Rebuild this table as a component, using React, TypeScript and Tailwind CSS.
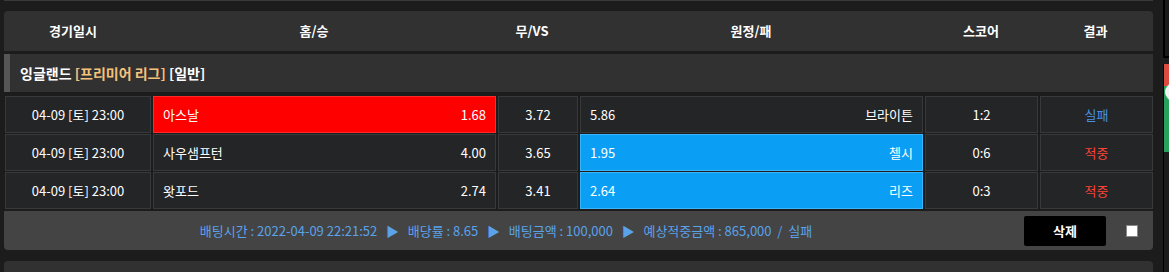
import React from 'react';

interface Game {
  date: string;
  home: string;
  homeOdds: string;
  draw: string;
  awayOdds: string;
  away: string;
  score: string;
  result: string;
  pick: 'home' | 'away';
}

const games: Game[] = [
  { date: '04-09 [토] 23:00', home: '아스날', homeOdds: '1.68', draw: '3.72', awayOdds: '5.86', away: '브라이튼', score: '1:2', result: '실패', pick: 'home' },
  { date: '04-09 [토] 23:00', home: '사우샘프턴', homeOdds: '4.00', draw: '3.65', awayOdds: '1.95', away: '첼시', score: '0:6', result: '적중', pick: 'away' },
  { date: '04-09 [토] 23:00', home: '왓포드', homeOdds: '2.74', draw: '3.41', awayOdds: '2.64', away: '리즈', score: '0:3', result: '적중', pick: 'away' },
];

const cell = 'h-full flex items-center border border-[#38393b] bg-[#242527]';

function GameRow({ g }: { g: Game }) {
  const homeCls = g.pick === 'home' ? 'bg-[#ff0000] border-[#ff2a2a]' : 'bg-[#242527] border-[#38393b]';
  const awayCls = g.pick === 'away' ? 'bg-[#0a9ff5] border-[#3ab4fb]' : 'bg-[#242527] border-[#38393b]';
  return (
    <div className="grid grid-cols-[146px_343px_80px_343px_113px_113px] gap-x-[2px] pl-[1px] h-[37px]">
      <div className={`${cell} justify-center`}>{g.date}</div>
      <div className={`h-full flex items-center justify-between border px-[9px] ${homeCls}`}>
        <span>{g.home}</span>
        <span>{g.homeOdds}</span>
      </div>
      <div className={`${cell} justify-center`}>{g.draw}</div>
      <div className={`h-full flex items-center justify-between border px-[9px] ${awayCls}`}>
        <span>{g.awayOdds}</span>
        <span>{g.away}</span>
      </div>
      <div className={`${cell} justify-center`}>{g.score}</div>
      <div className={`${cell} justify-center ${g.result === '실패' ? 'text-[#4a90e2]' : 'text-[#ff4336]'}`}>{g.result}</div>
    </div>
  );
}

export default function App() {
  return (
    <div className="w-[1169px] h-[272px] overflow-hidden bg-[#1c1c1c] flex text-white text-[13px] font-['Noto_Sans_CJK_KR','Noto_Sans',sans-serif]">
      <div className="ml-[4px] w-[1149px] flex flex-col">
        <div className="h-px bg-[#3a3a3a]" />
        <div className="mt-[10px] h-[40px] rounded-t-[4px] bg-[#313131] grid grid-cols-[138px_344px_92px_346px_114px_115px] items-center font-bold">
          <div className="text-center">경기일시</div>
          <div className="text-center">홈/승</div>
          <div className="text-center">무/VS</div>
          <div className="text-center">원정/패</div>
          <div className="text-center">스코어</div>
          <div className="text-center">결과</div>
        </div>
        <div className="mt-[3px] h-[38px] bg-[#313131] border-l-[6px] border-[#565656] flex items-center pl-[10px] text-[14px] font-bold">
          <span>잉글랜드&nbsp;</span>
          <span className="text-[#f5c27c]">[프리미어 리그]</span>
          <span>&nbsp;[일반]</span>
        </div>
        <div className="mt-[4px] flex flex-col gap-y-[1px]">
          {games.map((g) => <GameRow key={g.home} g={g} />)}
        </div>
        <div className="mt-[2px] h-[39px] bg-[#444444] rounded-b-[4px] flex items-center">
          <div className="flex-1 pr-[16px] text-center text-[#5aa2ea]">
            배팅시간 : 2022-04-09 22:21:52 &nbsp;&nbsp;▶&nbsp;&nbsp; 배당률 : 8.65 &nbsp;&nbsp;▶&nbsp;&nbsp; 배팅금액 : 100,000 &nbsp;&nbsp;▶&nbsp;&nbsp; 예상적중금액 : 865,000 &nbsp;/&nbsp; 실패
          </div>
          <button className="w-[82px] h-[30px] bg-black rounded-[2px] font-bold text-white">삭제</button>
          <div className="ml-[20px] mr-[15px] w-[12px] h-[12px] bg-white border border-[#888]" />
        </div>
        <div className="mt-[11px] flex-1 bg-[#313131] rounded-t-[4px]" />
      </div>
      <div className="ml-[10px] w-[6px] flex flex-col">
        <div className="h-[58px] border-l-2 border-b-2 border-black bg-[#1a1a1a]" />
        <div className="mt-[6px] flex-1 border-l border-black">
          <svg width="5" height="90" viewBox="0 0 5 90">
            <rect x="0" y="0" width="5" height="88" fill="#27a05c" />
            <rect x="0" y="0" width="5" height="22" fill="#db4b40" />
            <circle cx="10" cy="28" r="9" fill="#f4f4f4" />
          </svg>
        </div>
      </div>
    </div>
  );
}
